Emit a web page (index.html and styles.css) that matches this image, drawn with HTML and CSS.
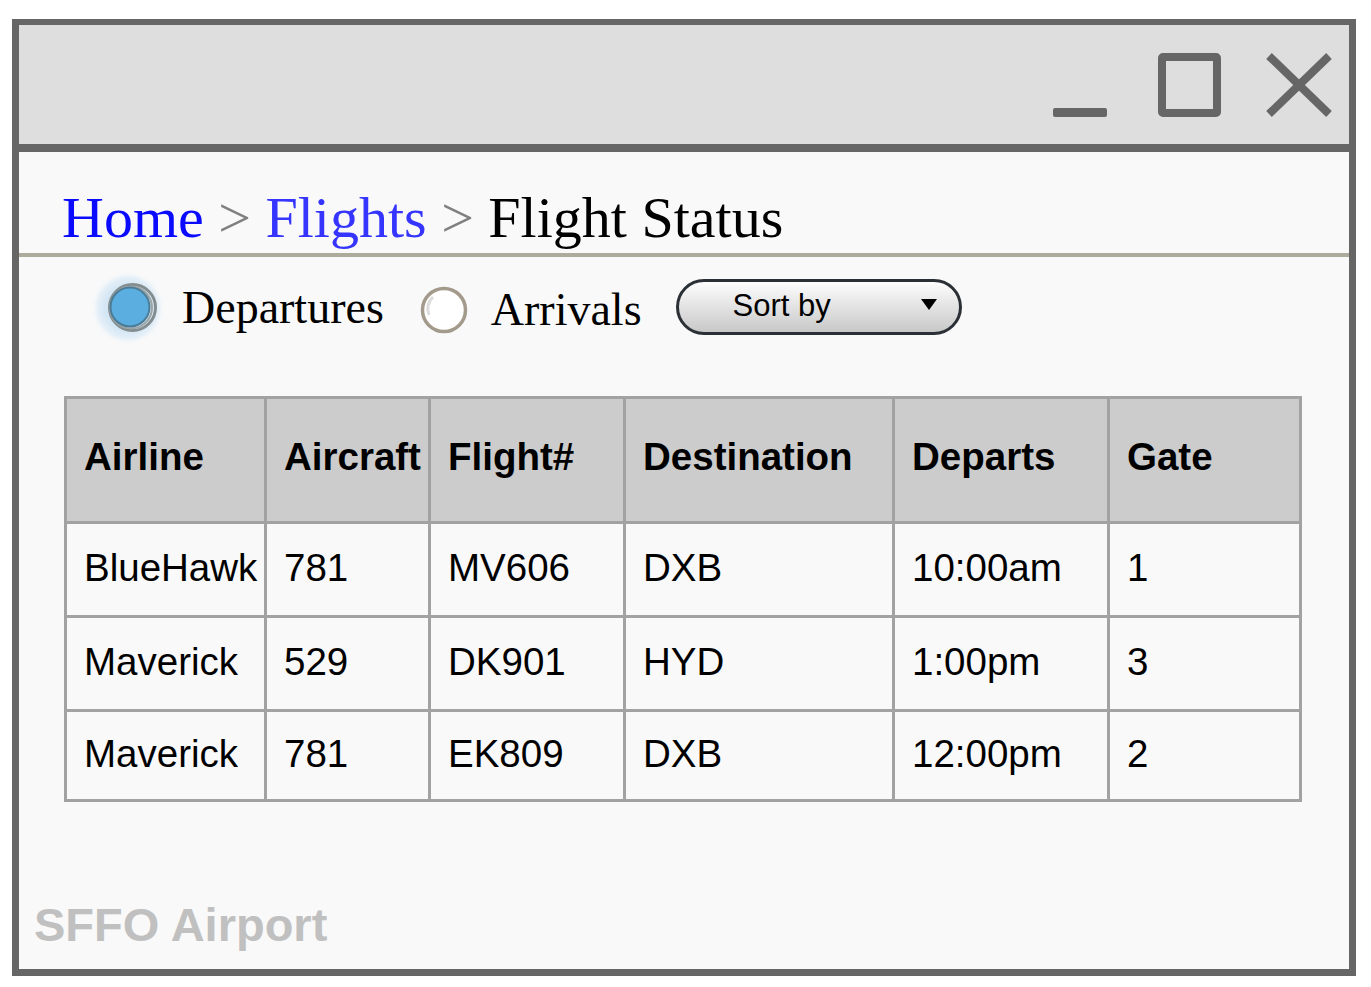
FILE: index.html
```html
<!DOCTYPE html>
<html lang="en">
<head>
<meta charset="utf-8">
<title>Flight Status</title>
<link rel="stylesheet" href="styles.css">
</head>
<body>
<div class="window">
  <div class="titlebar">
    <svg class="controls" width="290" height="75" viewBox="0 0 290 75" aria-hidden="true">
      <rect x="5" y="60" width="54" height="9" rx="2" fill="#666"/>
      <rect x="114" y="9" width="55" height="56" rx="1" fill="none" stroke="#666" stroke-width="8"/>
      <line x1="221" y1="8" x2="281" y2="66" stroke="#666" stroke-width="8"/>
      <line x1="281" y1="8" x2="221" y2="66" stroke="#666" stroke-width="8"/>
    </svg>
  </div>
  <div class="content">
    <div class="breadcrumb"><span class="crumb-home">Home</span> <span class="sep">&gt;</span> <span class="crumb-flights">Flights</span> <span class="sep">&gt;</span> <span class="crumb-current">Flight Status</span></div>

    <div class="filters">
      <svg class="radio-on" width="70" height="70" viewBox="0 0 70 70" aria-hidden="true">
        <defs>
          <radialGradient id="glow" cx="0.5" cy="0.5" r="0.5">
            <stop offset="0.6" stop-color="#d3e6f4"/>
            <stop offset="0.82" stop-color="#e4eff8"/>
            <stop offset="1" stop-color="#f9f9f9" stop-opacity="0"/>
          </radialGradient>
        </defs>
        <circle cx="33" cy="35" r="37" fill="url(#glow)"/>
        <circle cx="37.5" cy="34.5" r="23" fill="none" stroke="#838c8e" stroke-width="3"/>
        <circle cx="36" cy="34.5" r="21" fill="none" stroke="#9aa3a5" stroke-width="2"/>
        <circle cx="35" cy="34" r="19.5" fill="#5aaee0" stroke="#4c7b96" stroke-width="2"/>
      </svg>
      <span class="radio-label label-dep">Departures</span>
      <svg class="radio-off" width="50" height="50" viewBox="0 0 50 50" aria-hidden="true">
        <circle cx="25" cy="25" r="21.5" fill="#ffffff" stroke="#a39a8c" stroke-width="3.5"/>
        <path d="M10 30 A 16 16 0 0 1 14 12" fill="none" stroke="#dcdcdc" stroke-width="3"/>
      </svg>
      <span class="radio-label label-arr">Arrivals</span>
      <div class="sort">
        <span class="sort-text">Sort by</span>
        <svg class="caret" width="16" height="11" viewBox="0 0 16 11" aria-hidden="true"><polygon points="0,0 16,0 8,11" fill="#000"/></svg>
      </div>
    </div>

    <table class="flights">
      <colgroup>
        <col class="c1"><col class="c2"><col class="c3"><col class="c4"><col class="c5"><col class="c6">
      </colgroup>
      <thead>
        <tr class="head-row">
          <th>Airline</th><th>Aircraft</th><th>Flight#</th><th>Destination</th><th>Departs</th><th>Gate</th>
        </tr>
      </thead>
      <tbody>
        <tr class="row">
          <td>BlueHawk</td><td>781</td><td>MV606</td><td>DXB</td><td>10:00am</td><td>1</td>
        </tr>
        <tr class="row">
          <td>Maverick</td><td>529</td><td>DK901</td><td>HYD</td><td>1:00pm</td><td>3</td>
        </tr>
        <tr class="row row-last">
          <td>Maverick</td><td>781</td><td>EK809</td><td>DXB</td><td>12:00pm</td><td>2</td>
        </tr>
      </tbody>
    </table>

    <div class="footer">SFFO Airport</div>
  </div>
</div>
</body>
</html>
```

FILE: styles.css
```css
html, body {
  margin: 0;
  padding: 0;
  background: #ffffff;
}

body {
  font-family: "Liberation Sans", Arial, sans-serif;
}

.window {
  box-sizing: border-box;
  margin-left: 12px;
  margin-top: 19px;
  width: 1344px;
  height: 957px;
  border-style: solid;
  border-color: #666666;
  border-width: 6px 7px 7px 7px;
  background: #f9f9f9;
  display: flex;
  flex-direction: column;
}

.titlebar {
  height: 96px;
  background: #dedede;
  border-bottom: 8px solid #666666;
  display: flex;
  justify-content: flex-end;
  align-items: flex-start;
  padding: 23px 11px 0 0;
  box-sizing: content-box;
  flex-shrink: 0;
}

.titlebar .controls {
  display: block;
}

.content {
  flex: 1;
  display: flex;
  flex-direction: column;
  background: #f9f9f9;
}

.breadcrumb {
  font-family: "Liberation Serif", "Times New Roman", serif;
  font-size: 58px;
  line-height: 66px;
  padding: 33px 0 2px 43px;
  border-bottom: 4px solid #acab9c;
  white-space: nowrap;
}

.crumb-home {
  color: #0a0aff;
}

.crumb-flights {
  color: #3535ff;
}

.sep {
  color: #808080;
}

.crumb-current {
  color: #000000;
}

.filters {
  display: flex;
  align-items: center;
  height: 60px;
  margin-top: 21px;
}

.radio-on {
  display: block;
  margin-left: 76px;
  overflow: visible;
}

.radio-off {
  display: block;
  margin-left: 35px;
  margin-top: 4px;
}

.radio-label {
  font-family: "Liberation Serif", "Times New Roman", serif;
  font-size: 46px;
  line-height: 46px;
  color: #000000;
}

.label-dep {
  margin-left: 17px;
}

.label-arr {
  margin-left: 22px;
  margin-top: 4px;
}

.sort {
  box-sizing: border-box;
  width: 286px;
  height: 56px;
  margin-left: 34px;
  margin-top: -2px;
  border: 3px solid #2a3035;
  border-radius: 28px;
  background: linear-gradient(#fdfdfd, #c8c8c8);
  display: flex;
  align-items: center;
  justify-content: space-between;
  padding: 0 22px 0 54px;
}

.sort-text {
  font-family: "Liberation Sans", Arial, sans-serif;
  font-size: 31px;
  line-height: 31px;
  color: #000000;
  margin-top: -4px;
}

.caret {
  display: block;
  margin-top: -6px;
}

.flights {
  margin-top: 58px;
  margin-left: 45px;
  border-collapse: separate;
  border-spacing: 0;
  table-layout: fixed;
  width: 1238px;
  border-top: 3px solid #a2a2a2;
  border-left: 3px solid #a2a2a2;
  font-family: "Liberation Sans", Arial, sans-serif;
  font-size: 38.5px;
  color: #000000;
}

.c1 { width: 200px; }
.c2 { width: 164px; }
.c3 { width: 195px; }
.c4 { width: 269px; }
.c5 { width: 215px; }
.c6 { width: 192px; }

.flights th,
.flights td {
  box-sizing: border-box;
  border-right: 3px solid #a2a2a2;
  border-bottom: 3px solid #a2a2a2;
  padding: 0 0 4px 17px;
  text-align: left;
  vertical-align: middle;
  white-space: nowrap;
  overflow: hidden;
}

.flights th {
  background: #cccccc;
  font-weight: bold;
  padding-bottom: 6px;
}

.flights td {
  background: #f9f9f9;
  font-weight: normal;
}

.head-row {
  height: 125px;
}

.row {
  height: 94px;
}

.row-last {
  height: 90px;
}

.footer {
  margin-top: 100px;
  padding-left: 15px;
  font-family: "Liberation Sans", Arial, sans-serif;
  font-weight: bold;
  font-size: 47px;
  line-height: 46px;
  color: #c0c0c0;
}
```
